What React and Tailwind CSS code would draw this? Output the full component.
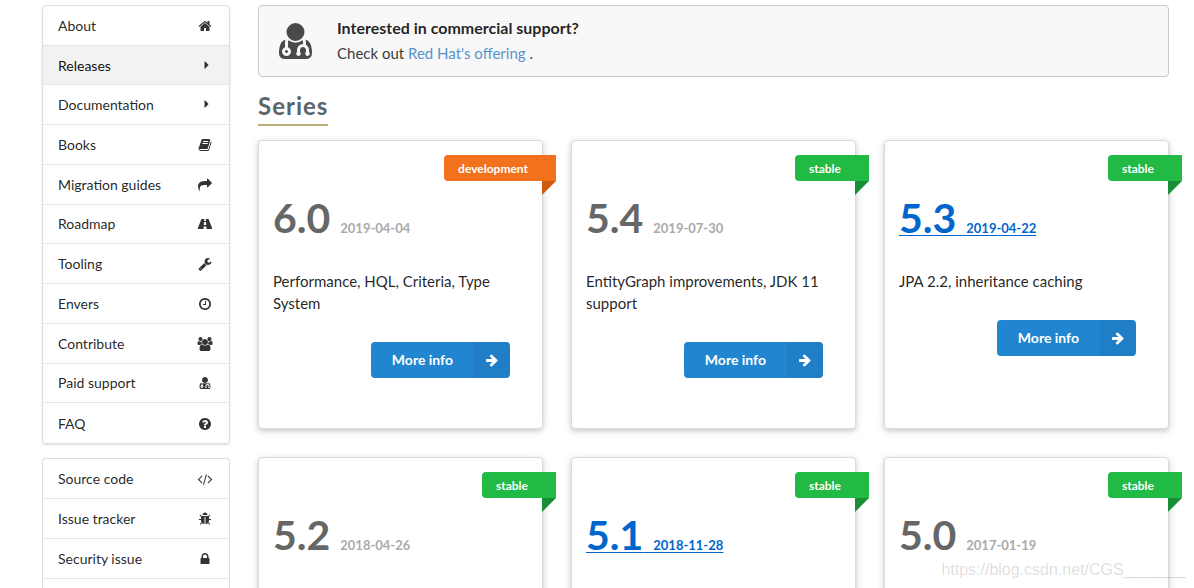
import React from 'react';

// Font Awesome 4 glyphs on a 1792 unit em
const icons = {
  home: { width: 1792, d: 'M1472 992v480q0 26-19 45t-45 19h-384v-384h-256v384h-384q-26 0-45-19t-19-45v-480q0-1 .5-3t.5-3l575-474 575 474q1 2 1 6zm223-69l-62 74q-8 9-21 11h-3q-13 0-21-7l-692-577-692 577q-12 8-24 7-13-2-21-11l-62-74q-8-10-7-23.5t11-21.5l719-599q32-26 76-26t76 26l244 204v-195q0-14 9-23t23-9h192q14 0 23 9t9 23v408l219 182q10 8 11 21.5t-7 23.5z' },
  caret: { width: 1024, d: 'M960 768q0 24-17 41l-400 400q-17 17-41 17t-41-17-17-41v-800q0-24 17-41t41-17 41 17l400 400q17 17 17 41z' },
  book: { width: 1792, d: 'M1703 478q40 57 18 129l-275 906q-19 64-76.5 107.5t-122.5 43.5h-923q-77 0-148.5-53.5t-99.5-131.5q-24-67-2-127 0-4 3-27t4-37q1-8-3-21.5t-3-19.5q2-11 8-21t16.5-23.5 16.5-23.5q23-38 45-91.5t30-91.5q3-10 .5-30t-.5-28q3-11 17-28t17-23q21-36 42-92t25-90q1-9-2.5-32t.5-28q4-13 22-30.5t22-22.5q19-26 42.5-84.5t27.5-96.5q1-8-3-25.5t-2-26.5q2-8 9-18t18-23 17-21q8-12 16.5-30.5t15-35 16-36 19.5-32 26.5-23.5 36-11.5 47.5 5.5l-1 3q38-9 51-9h761q74 0 114 56t18 130l-274 906q-36 119-71.5 153.5t-128.5 34.5h-869q-27 0-38 15-11 16-1 43 24 70 144 70h923q29 0 56-15.5t35-41.5l300-987q7-22 5-57 38 15 59 43zm-1064 2q-4 13 2 22.5t20 9.5h608q13 0 25.5-9.5t16.5-22.5l21-64q4-13-2-22.5t-20-9.5h-608q-13 0-25.5 9.5t-16.5 22.5zm-83 256q-4 13 2 22.5t20 9.5h608q13 0 25.5-9.5t16.5-22.5l21-64q4-13-2-22.5t-20-9.5h-608q-13 0-25.5 9.5t-16.5 22.5z' },
  share: { width: 1792, d: 'M1792 640q0 26-19 45l-512 512q-19 19-45 19t-45-19-19-45v-256h-224q-98 0-175.5 6t-154 21.5-133 42.5-105.5 69.5-80 101-48.5 138.5-17.5 181q0 55 5 123 0 6 2.5 23.5t2.5 26.5q0 15-8.5 25t-23.5 10q-16 0-28-17-7-9-13-22t-13.5-30-10.5-24q-127-285-127-451 0-199 53-333 162-403 875-403h224v-256q0-26 19-45t45-19 45 19l512 512q19 19 19 45z' },
  road: { width: 1920, d: 'M1111 996v-4l-24-320q-1-13-11-22.5t-23-9.5h-186q-13 0-23 9.5t-11 22.5l-24 320v4q-1 12 8 20t21 8h244q12 0 21-8t8-20zM1870 1463q0 73-46 73h-704q13 0 22-9.5t8-22.5l-20-256q-1-13-11-22.5t-23-9.5h-272q-13 0-23 9.5t-11 22.5l-20 256q-1 13 8 22.5t22 9.5h-704q-46 0-46-73 0-54 26-116l417-1044q8-19 26-33t38-14h339q-13 0-23 9.5t-11 22.5l-15 192q-1 14 8 23t22 9h166q13 0 22-9t8-23l-15-192q-1-13-11-22.5t-23-9.5h339q20 0 38 14t26 33l417 1044q26 62 26 116z' },
  wrench: { width: 1792, d: 'M448 1472q0-26-19-45t-45-19-45 19-19 45 19 45 45 19 45-19 19-45zm644-420l-682 682q-37 37-90 37-52 0-91-37l-106-108q-38-36-38-90 0-53 38-91l681-681q39 98 114.5 173.5t173.5 114.5zm634-435q0 39-23 106-47 134-164.5 217.5t-258.5 83.5q-185 0-316.5-131.5t-131.5-316.5 131.5-316.5 316.5-131.5q58 0 121.5 16.5t107.5 46.5q16 11 16 28t-16 28l-293 169v224l193 107q5-3 79-48.5t135.5-81 70.5-35.5q15 0 23.5 10t8.5 25z' },
  clock: { width: 1792, d: 'M1024 544v448q0 14-9 23t-23 9h-320q-14 0-23-9t-9-23v-64q0-14 9-23t23-9h224v-352q0-14 9-23t23-9h64q14 0 23 9t9 23zm416 352q0-148-73-273t-198-198-273-73-273 73-198 198-73 273 73 273 198 198 273 73 273-73 198-198 73-273zm224 0q0 209-103 385.5t-279.5 279.5-385.5 103-385.5-103-279.5-279.5-103-385.5 103-385.5 279.5-279.5 385.5-103 385.5 103 279.5 279.5 103 385.5z' },
  users: { width: 1920, d: 'M593 896q-162 5-265 128h-134q-82 0-138-40.5t-56-118.5q0-353 124-353 6 0 43.5 21t97.5 42.5 119 21.5q67 0 133-23-5 37-5 66 0 159 93 293zm1071 637q0 120-73 189.5t-194 69.5h-874q-121 0-194-69.5t-73-189.5q0-53 3.5-103.5t14-109 26.5-108.5 43-97.5 62-81 85.5-53.5 111.5-20q10 0 43 21.5t73 48 107 48 135 21.5 135-21.5 107-48 73-48 43-21.5q61 0 111.5 20t85.5 53.5 62 81 43 97.5 26.5 108.5 14 109 3.5 103.5zm-1024-1277q0 106-75 181t-181 75-181-75-75-181 75-181 181-75 181 75 75 181zm704 384q0 159-112.5 271.5t-271.5 112.5-271.5-112.5-112.5-271.5 112.5-271.5 271.5-112.5 271.5 112.5 112.5 271.5zm576 225q0 78-56 118.5t-138 40.5h-134q-103-123-265-128 93-134 93-293 0-29-5-66 66 23 133 23 59 0 119-21.5t97.5-42.5 43.5-21q124 0 124 353zm-128-609q0 106-75 181t-181 75-181-75-75-181 75-181 181-75 181 75 75 181z' },
  doctor: { width: 1408, flip: true, d: 'M384 192q0 -26 -19 -45t-45 -19t-45 19t-19 45t19 45t45 19t45 -19t19 -45zM1408 131q0 -121 -73 -190t-194 -69h-874q-121 0 -194 69t-73 190q0 68 5.5 131t24 138t47.5 132.5t81 103t120 60.5q-22 -52 -22 -120v-203q-58 -20 -93 -70t-35 -111q0 -80 56 -136t136 -56t136 56t56 136q0 61 -35.5 111t-92.5 70v203q0 62 25 93q132 -104 295 -104t295 104q25 -31 25 -93v-64q-106 0 -181 -75t-75 -181v-89q-32 -29 -32 -71q0 -40 28 -68t68 -28t68 28t28 68q0 42 -32 71v89q0 52 38 90t90 38t90 -38t38 -90v-89q-32 -29 -32 -71q0 -40 28 -68t68 -28t68 28t28 68q0 42 -32 71v89q0 68 -34.5 127.5t-93.5 93.5q0 10 0.5 42.5t0 48t-2.5 41.5t-7 47t-13 40q68 -15 120 -60.5t81 -103t47.5 -132.5t24 -138t5.5 -131zM1088 1024q0 -159 -112.5 -271.5t-271.5 -112.5t-271.5 112.5t-112.5 271.5t112.5 271.5t271.5 112.5t271.5 -112.5t112.5 -271.5z' },
  question: { width: 1792, d: 'M1024 1376v-192q0-14-9-23t-23-9h-192q-14 0-23 9t-9 23v192q0 14 9 23t23 9h192q14 0 23-9t9-23zm256-672q0-88-55.5-163t-138.5-116-170-41q-243 0-371 213-15 24 8 42l132 100q7 6 19 6 16 0 25-12 53-68 86-92 34-24 86-24 48 0 85.5 26t37.5 59q0 38-20 61t-68 45q-63 28-115.5 86.5t-52.5 125.5v36q0 14 9 23t23 9h192q14 0 23-9t9-23q0-19 21.5-49.5t54.5-49.5q32-18 49-28.5t46-35 44.5-48 28-60.5 12.5-81zm384 192q0 209-103 385.5t-279.5 279.5-385.5 103-385.5-103-279.5-279.5-103-385.5 103-385.5 279.5-279.5 385.5-103 385.5 103 279.5 279.5 103 385.5z' },
  code: { width: 1920, d: 'M617 1399l-50 50q-10 10-23 10t-23-10l-466-466q-10-10-10-23t10-23l466-466q10-10 23-10t23 10l50 50q10 10 10 23t-10 23l-393 393 393 393q10 10 10 23t-10 23zm591-1067l-373 1291q-4 13-15.5 19.5t-23.5 2.5l-62-17q-13-4-19.5-15.5t-2.5-24.5l373-1291q4-13 15.5-19.5t23.5-2.5l62 17q13 4 19.5 15.5t2.5 24.5zm657 651l-466 466q-10 10-23 10t-23-10l-50-50q-10-10-10-23t10-23l393-393-393-393q-10-10-10-23t10-23l50-50q10-10 23-10t23 10l466 466q10 10 10 23t-10 23z' },
  bug: { width: 1792, d: 'M1696 960q0 26-19 45t-45 19h-224q0 171-67 290l208 209q19 19 19 45t-19 45q-18 19-45 19t-45-19l-198-197q-5 5-15 13t-42 28.5-65 36.5-82 29-97 13v-896h-128v896q-51 0-101.5-13.5t-87-33-66-39-43.5-32.5l-15-14-183 207q-20 21-48 21-24 0-43-16-19-18-20.5-44.5t15.5-46.5l202-227q-58-114-58-274h-224q-26 0-45-19t-19-45 19-45 45-19h224v-294l-173-173q-19-19-19-45t19-45 45-19 45 19l173 173h844l173-173q19-19 45-19t45 19 19 45-19 45l-173 173v294h224q26 0 45 19t19 45zm-480-576h-640q0-133 93.5-226.5t226.5-93.5 226.5 93.5 93.5 226.5z' },
  lock: { width: 1792, d: 'M640 768h512v-192q0-106-75-181t-181-75-181 75-75 181v192zm832 96v576q0 40-28 68t-68 28h-960q-40 0-68-28t-28-68v-576q0-40 28-68t68-28h32v-192q0-184 132-316t316-132 316 132 132 316v192h32q40 0 68 28t28 68z' },
  arrow: { width: 1792, d: 'M1600 960q0 54-37 91l-651 651q-39 37-91 37-51 0-90-37l-75-75q-38-38-38-91t38-91l293-293h-704q-52 0-84.5-37.5t-32.5-90.5v-128q0-53 32.5-90.5t84.5-37.5h704l-293-294q-38-36-38-90t38-90l75-75q38-38 90-38 53 0 91 38l651 651q37 35 37 90z' },
};

const mainMenu = [
  { label: 'About', icon: 'home' },
  { label: 'Releases', icon: 'caret', active: true },
  { label: 'Documentation', icon: 'caret' },
  { label: 'Books', icon: 'book' },
  { label: 'Migration guides', icon: 'share' },
  { label: 'Roadmap', icon: 'road' },
  { label: 'Tooling', icon: 'wrench' },
  { label: 'Envers', icon: 'clock' },
  { label: 'Contribute', icon: 'users' },
  { label: 'Paid support', icon: 'doctor' },
  { label: 'FAQ', icon: 'question' },
];

const devMenu = [
  { label: 'Source code', icon: 'code' },
  { label: 'Issue tracker', icon: 'bug' },
  { label: 'Security issue', icon: 'lock' },
];

const series = [
  { version: '6.0', date: '2019-04-04', status: 'development', text: 'Performance, HQL, Criteria, Type System' },
  { version: '5.4', date: '2019-07-30', status: 'stable', text: 'EntityGraph improvements, JDK 11 support' },
  { version: '5.3', date: '2019-04-22', status: 'stable', text: 'JPA 2.2, inheritance caching', linked: true },
  { version: '5.2', date: '2018-04-26', status: 'stable' },
  { version: '5.1', date: '2018-11-28', status: 'stable', linked: true },
  { version: '5.0', date: '2017-01-19', status: 'stable' },
];

function Icon({ name, className }) {
  const icon = icons[name];
  return (
    <svg viewBox={`0 0 ${icon.width} 1792`} className={className} fill="currentColor" overflow="visible" aria-hidden="true">
      <path d={icon.d} transform={icon.flip ? 'matrix(1 0 0 -1 0 1536)' : undefined} />
    </svg>
  );
}

function MenuItem({ item, className }) {
  return (
    <li className={className}>
      <a
        href="#"
        className={`flex h-full items-center justify-between pt-px pr-4 pl-[15px] text-sm leading-5 ${item.active ? 'bg-[#f2f2f2] text-black/95' : 'text-black/87'}`}
      >
        {item.label}
        <span className="flex w-4 justify-center">
          <Icon name={item.icon} className="h-[14px] w-4 text-[#333]" />
        </span>
      </a>
    </li>
  );
}

function Ribbon({ status }) {
  const dev = status === 'development';
  return (
    <div className="absolute top-[14px] -right-[14px]">
      <div className={`h-[26px] rounded-l pr-7 pl-[14px] text-xs leading-[27px] font-bold text-white ${dev ? 'bg-[#f2711c]' : 'bg-[#21ba45]'}`}>
        {status}
      </div>
      <div className={`ml-auto h-[14px] w-[14px] [clip-path:polygon(0_0,100%_0,0_100%)] ${dev ? 'bg-[#cf590c]' : 'bg-[#198f35]'}`} />
    </div>
  );
}

function SeriesCard({ item }) {
  const underline = item.linked ? 'underline decoration-1 underline-offset-2' : '';
  const title = (
    <>
      <span className={`text-[41px] ${underline}`}>{item.version} </span>
      <span className={`text-[13px] ${item.linked ? '' : 'text-[#aaa]'} ${underline}`}>{item.date}</span>
    </>
  );
  return (
    <article className="relative min-h-[289px] rounded border border-[#d9dadb] bg-white px-[14px] shadow-[0_2px_4px_rgba(34,36,38,0.14),0_2px_10px_rgba(34,36,38,0.12)]">
      <Ribbon status={item.status} />
      <h3 className="mt-[51px] leading-[52px] font-bold whitespace-nowrap text-[#666]">
        {item.linked ? <a href="#" className="text-[#0066cc]">{title}</a> : title}
      </h3>
      {item.text && (
        <>
          <p className="mt-4 text-[15px] leading-[22px]">{item.text}</p>
          <div className="mt-7 mr-[18px] flex justify-end">
            <button type="button" className="flex h-9 items-center overflow-hidden rounded bg-[#2185d0] text-sm font-bold text-white">
              <span className="px-[21px]">More info</span>
              <span className="flex h-full w-9 items-center justify-center bg-black/5">
                <Icon name="arrow" className="h-[14px] w-[14px]" />
              </span>
            </button>
          </div>
        </>
      )}
    </article>
  );
}

export default function App() {
  return (
    <div className="relative flex h-screen items-start gap-7 overflow-hidden bg-white pt-[5px] pr-[25px] pl-[42px] font-[Lato,sans-serif] text-black/87">
      <nav className="flex w-[188px] shrink-0 flex-col gap-[14px] self-stretch">
        <ul className="grid h-[439px] shrink-0 auto-rows-fr divide-y divide-[#e6e6e7] overflow-hidden rounded border border-[#dededf] shadow-[0_1px_2px_rgba(34,36,38,0.15)]">
          {mainMenu.map(item => (
            <MenuItem key={item.label} item={item} />
          ))}
        </ul>
        <ul className="grow rounded-t border border-b-0 border-[#dededf]">
          {devMenu.map(item => (
            <MenuItem key={item.label} item={item} className="h-10 border-b border-[#e6e6e7]" />
          ))}
        </ul>
      </nav>

      <main className="min-w-0 grow">
        <section className="flex items-center rounded border border-[#c9caca] bg-[#f8f8f9] py-[10px] pl-5">
          <Icon name="doctor" className="h-[42px] w-[33px] text-[#4a4a4a]" />
          <div className="ml-[25px] text-[15px]">
            <h2 className="text-base leading-6 font-bold">Interested in commercial support?</h2>
            <p className="leading-[26px] text-black/80">
              Check out <a href="#" className="text-[#5694ca]">Red Hat's offering</a> .
            </p>
          </div>
        </section>

        <h1 className="mt-3 w-fit border-b-2 border-[#bcae79] pb-[2px] text-2xl leading-[33px] font-bold tracking-[1px] text-[#5a656c]">Series</h1>

        <div className="mt-[14px] grid grid-cols-3 gap-7">
          {series.map(item => (
            <SeriesCard key={item.version} item={item} />
          ))}
        </div>
      </main>

      <p className="absolute right-2 bottom-2 font-['Liberation_Sans',sans-serif] text-base leading-5 text-black/15">https://blog.csdn.net/CGS_______</p>
    </div>
  );
}
